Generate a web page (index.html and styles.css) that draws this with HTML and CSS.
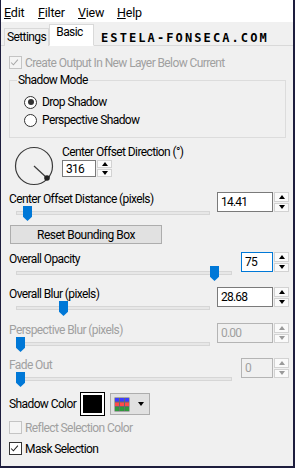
FILE: index.html
```html
<!DOCTYPE html>
<html lang="en">

<head>
    <meta charset="UTF-8">
    <meta name="viewport" content="width=device-width, initial-scale=1.0">
    <title>Drop Shadow</title>
    <link rel="stylesheet" href="styles.css">
</head>

<body>
    <div class="window">
        <div class="menubar">
            <span class="menu"><u>E</u>dit</span>
            <span class="menu"><u>F</u>ilter</span>
            <span class="menu"><u>V</u>iew</span>
            <span class="menu"><u>H</u>elp</span>
        </div>

        <div class="tabs">
            <span class="tab">Settings</span>
            <span class="tab active">Basic</span>
            <span class="mark">ESTELA-FONSECA.COM</span>
        </div>

        <div class="page">
            <div class="check disabled" id="createOutput">
                <span class="box"><svg viewBox="0 0 13 13"><path d="M2.5 6.5 L5.2 9.2 L10.5 3.2" /></svg></span>
                Create Output In New Layer Below Current
            </div>

            <fieldset class="group">
                <legend>Shadow Mode</legend>
                <div class="radio"><span class="dot on"></span>Drop Shadow</div>
                <div class="radio"><span class="dot"></span>Perspective Shadow</div>
            </fieldset>

            <div class="direction">
                <svg class="dial" viewBox="0 0 40 40" width="40" height="40">
                    <circle cx="20" cy="20" r="18.5" fill="none" stroke="#3a3a3a" stroke-width="1.2" />
                    <line x1="20" y1="20" x2="33" y2="32" stroke="#3a3a3a" stroke-width="1.2" />
                    <circle cx="33" cy="32" r="2.8" fill="#222" />
                </svg>
                <div>
                    <div class="label">Center Offset Direction (°)</div>
                    <div class="spin small">
                        <span class="field">316</span>
                        <span class="arrows"><i class="up"></i><i class="down"></i></span>
                    </div>
                </div>
            </div>

            <div class="param wide" id="distance">
                <div class="label">Center Offset Distance (pixels)</div>
                <div class="slider"><span class="track"></span><span class="thumb" style="left: 7px"></span></div>
                <div class="spin">
                    <span class="field">14.41</span>
                    <span class="arrows"><i class="up"></i><i class="down"></i></span>
                </div>
            </div>

            <button class="reset">Reset Bounding Box</button>

            <div class="param" id="opacity">
                <div class="label">Overall Opacity</div>
                <div class="slider"><span class="track"></span><span class="thumb" style="left: 194px"></span></div>
                <div class="spin focus">
                    <span class="field">75</span>
                    <span class="arrows"><i class="up"></i><i class="down"></i></span>
                </div>
            </div>

            <div class="param wide" id="blur">
                <div class="label">Overall Blur (pixels)</div>
                <div class="slider"><span class="track"></span><span class="thumb" style="left: 43px"></span></div>
                <div class="spin">
                    <span class="field">28.68</span>
                    <span class="arrows"><i class="up"></i><i class="down"></i></span>
                </div>
            </div>

            <div class="param wide disabled" id="perspBlur">
                <div class="label">Perspective Blur (pixels)</div>
                <div class="slider"><span class="track"></span><span class="thumb" style="left: 0px"></span></div>
                <div class="spin">
                    <span class="field">0.00</span>
                    <span class="arrows"><i class="up"></i><i class="down"></i></span>
                </div>
            </div>

            <div class="param disabled" id="fade">
                <div class="label">Fade Out</div>
                <div class="slider"><span class="track"></span><span class="thumb" style="left: 0px"></span></div>
                <div class="spin">
                    <span class="field">0</span>
                    <span class="arrows"><i class="up"></i><i class="down"></i></span>
                </div>
            </div>

            <div class="color-row">
                <span class="color-label">Shadow Color</span>
                <span class="swatch"></span>
                <span class="palette">
                    <svg viewBox="0 0 16 15" width="16" height="15">
                        <rect x="0.5" y="0.5" width="15" height="14" fill="#6a6a6a" />
                        <rect x="1" y="1" width="4" height="3.5" fill="#3c3cff" />
                        <rect x="6" y="1" width="4" height="3.5" fill="#3c3cff" />
                        <rect x="11" y="1" width="4" height="3.5" fill="#3c3cff" />
                        <rect x="1" y="5.5" width="4" height="3.5" fill="#ff4a4a" />
                        <rect x="6" y="5.5" width="4" height="3.5" fill="#ff4a4a" />
                        <rect x="11" y="5.5" width="4" height="3.5" fill="#ff4a4a" />
                        <rect x="1" y="10" width="4" height="4" fill="#2f9a3c" />
                        <rect x="6" y="10" width="4" height="4" fill="#2f9a3c" />
                        <rect x="11" y="10" width="4" height="4" fill="#2f9a3c" />
                    </svg>
                    <i class="drop"></i>
                </span>
            </div>

            <div class="check disabled" id="reflect">
                <span class="box"></span>
                Reflect Selection Color
            </div>

            <div class="check" id="mask">
                <span class="box"><svg viewBox="0 0 13 13"><path d="M2.5 6.5 L5.2 9.2 L10.5 3.2" /></svg></span>
                Mask Selection
            </div>
        </div>
    </div>
</body>

</html>
```

FILE: styles.css
```css
body {
    margin: 0;
    font-family: Roboto, "Liberation Sans", sans-serif;
    font-size: 12px;
    letter-spacing: -0.6px;
    color: #000;
}

.window {
    width: 295px;
    height: 468px;
    box-sizing: border-box;
    background-color: #f0f0f0;
    border-left: 1px solid #1d1d3d;
    border-right: 2px solid #1d1d3d;
    border-bottom: 2px solid #1d1d3d;
    overflow: hidden;
}

/* menu */

.menubar {
    height: 22px;
    box-sizing: border-box;
    padding: 5px 0 0 3px;
    background-color: #fff;
    display: flex;
    line-height: 15px;
    font-size: 12.5px;
    letter-spacing: -0.2px;
}

.menu {
    width: 39px;
}

.menu:first-child {
    width: 34px;
}

.menu:nth-child(2) {
    width: 40px;
}

.menu u {
    text-decoration-thickness: 1px;
    text-underline-offset: 1px;
}

/* tabs */

.tabs {
    height: 24px;
    box-sizing: border-box;
    padding-left: 3px;
    display: flex;
    align-items: flex-end;
    border-bottom: 1px solid #d9d9d9;
}

.tab {
    width: 45px;
    height: 18px;
    box-sizing: border-box;
    border: 1px solid #d9d9d9;
    border-bottom: none;
    line-height: 16px;
    text-align: center;
    background-color: #f0f0f0;
    margin-bottom: -1px;
}

.tab.active {
    width: 45px;
    height: 22px;
    padding-right: 4px;
    line-height: 15px;
    background-color: #fff;
    border-bottom: 1px solid #fff;
}

.mark {
    margin: 0 0 2px 7px;
    font-family: "DejaVu Sans Mono", monospace;
    font-weight: bold;
    font-size: 12px;
    letter-spacing: 2.1px;
    line-height: 10px;
}

/* page */

.page {
    padding: 0 4px 0 8px;
}

.label {
    line-height: 14px;
    white-space: nowrap;
}

.disabled,
.disabled .label {
    color: #a0a0a0;
}

.check {
    display: flex;
    align-items: center;
    height: 13px;
    gap: 3px;
}

.box {
    width: 13px;
    height: 13px;
    box-sizing: border-box;
    border: 1px solid #333;
    background-color: #fff;
}

.box svg {
    display: block;
    width: 11px;
    height: 11px;
    margin: 0 0 0 -1px;
    overflow: visible;
}

.box path {
    fill: none;
    stroke: #222;
    stroke-width: 1.2;
}

.disabled .box {
    border-color: #c4c4c4;
    background-color: #f4f4f4;
}

.disabled .box path {
    stroke: #a8a8a8;
}

#createOutput {
    margin-top: 10px;
}

#reflect {
    margin-top: 5px;
}

#mask {
    margin-top: 8px;
}

/* shadow mode group */

.group {
    margin: 4px 3px 0 0;
    padding: 0 0 10px 14px;
    border: 1px solid #dcdcdc;
}

.group legend {
    margin-left: -7px;
    padding: 0 1px;
    line-height: 14px;
}

.radio {
    display: flex;
    align-items: center;
    gap: 5px;
    height: 14px;
    margin-top: 4px;
}

.group legend + .radio {
    margin-top: 8px;
}

.dot {
    width: 13px;
    height: 13px;
    box-sizing: border-box;
    border: 1px solid #333;
    border-radius: 50%;
    background-color: #fff;
    display: flex;
    align-items: center;
    justify-content: center;
}

.dot.on::after {
    content: "";
    width: 6px;
    height: 6px;
    border-radius: 50%;
    background-color: #333;
}

/* direction */

.direction {
    display: flex;
    gap: 8px;
    margin: 7px 0 0 5px;
}

.dial {
    display: block;
    margin-top: 1px;
}

.direction .spin {
    width: 50px;
    height: 17px;
    margin-top: 1px;
}

/* spinner */

.spin {
    display: flex;
    width: 72px;
    height: 20px;
    letter-spacing: -0.8px;
}

.field {
    flex: 1;
    box-sizing: border-box;
    border: 1px solid #7a7a7a;
    background-color: #fff;
    padding-left: 3px;
    display: flex;
    align-items: center;
    color: #000;
}

.focus .field {
    border-color: #0078d7;
}

.arrows {
    width: 15px;
    margin-left: 1px;
    display: flex;
    flex-direction: column;
    gap: 1px;
}

.arrows i {
    flex: 1;
    box-sizing: border-box;
    border: 1px solid #d2d2d2;
    background-color: #fafafa;
    display: flex;
    align-items: center;
    justify-content: center;
}

.arrows i::before {
    content: "";
    border-left: 3px solid transparent;
    border-right: 3px solid transparent;
}

.arrows .up::before {
    border-bottom: 4px solid #000;
}

.arrows .down::before {
    border-top: 4px solid #000;
}

.disabled .field {
    border-color: #b4b4b4;
    background-color: #f0f0f0;
    color: #a0a0a0;
}

.disabled .arrows .up::before {
    border-bottom-color: #9a9a9a;
}

.disabled .arrows .down::before {
    border-top-color: #9a9a9a;
}

/* parameter rows */

.param {
    display: grid;
    grid-template-columns: 1fr auto;
    margin-top: 5px;
}

.param .label {
    grid-column: 1;
}

.param .slider {
    grid-column: 1;
    margin: 0 9px 0 7px;
}

.param .spin {
    grid-column: 2;
    grid-row: 1 / span 2;
    width: 48px;
}

.param.wide .spin {
    width: 72px;
}

.param.wide .slider {
    margin-right: 7px;
}

#distance {
    margin-top: 6px;
}

#opacity {
    margin-top: 8px;
}

#perspBlur {
    margin-top: 6px;
}

.slider {
    position: relative;
    height: 16px;
}

.track {
    display: block;
    position: relative;
    top: 5px;
    height: 4px;
    box-sizing: border-box;
    border: 1px solid #d6d6d6;
    background-color: #e7e7e7;
}

.thumb {
    position: absolute;
    top: 0;
    width: 9px;
    height: 15px;
    background-color: #0078d7;
    clip-path: polygon(0 0, 100% 0, 100% 72%, 50% 100%, 0 72%);
}

/* button */

.reset {
    display: block;
    width: 152px;
    height: 19px;
    margin: 3px 0 0 1px;
    padding: 0;
    font-family: inherit;
    font-size: 12px;
    letter-spacing: -0.5px;
    background-color: #e1e1e1;
    border: 1px solid #adadad;
    color: #000;
}

/* shadow colour */

.color-row {
    display: flex;
    align-items: center;
    height: 24px;
    margin-top: 4px;
}

.color-label {
    width: 71px;
    white-space: nowrap;
}

.swatch {
    width: 25px;
    height: 24px;
    box-sizing: border-box;
    border: 1px solid #000;
    background-color: #000;
    box-shadow: inset 0 0 0 2px #fff;
}

.palette {
    width: 40px;
    height: 22px;
    box-sizing: border-box;
    margin-left: 5px;
    border: 1px solid #adadad;
    background-color: #e1e1e1;
    display: flex;
    align-items: center;
    padding-left: 3px;
    gap: 8px;
}

.palette svg {
    display: block;
}

.drop {
    border-left: 3.5px solid transparent;
    border-right: 3.5px solid transparent;
    border-top: 4px solid #000;
}
```
